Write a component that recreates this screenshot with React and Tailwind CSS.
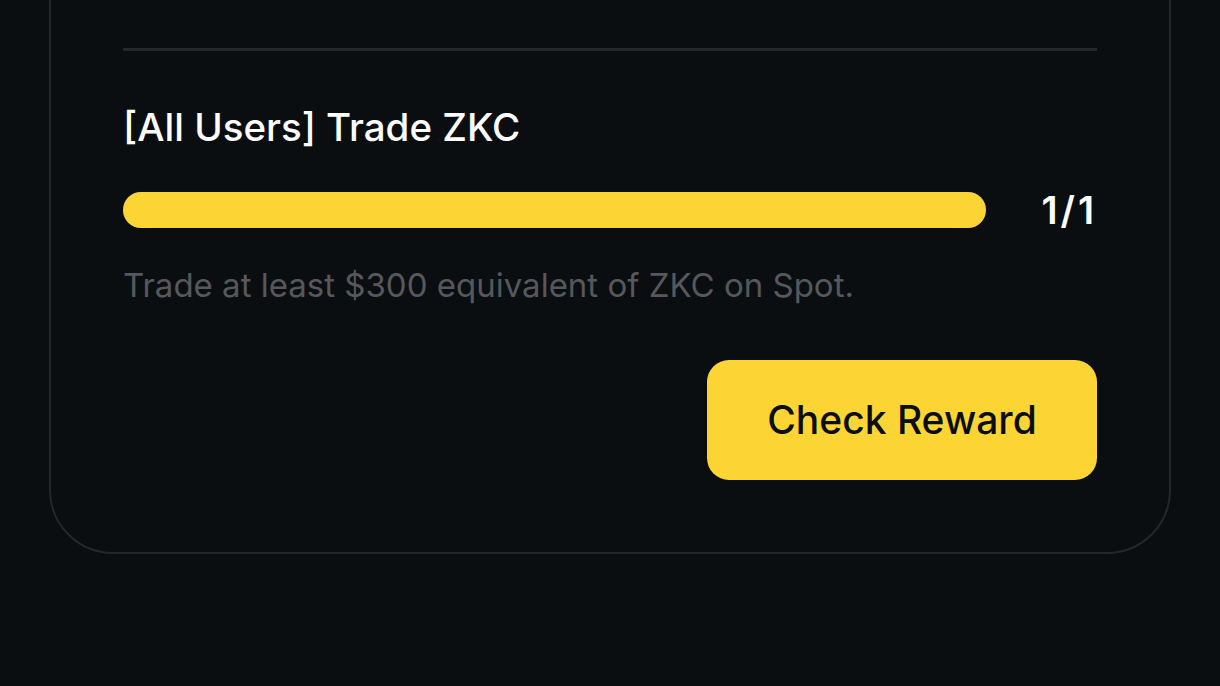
import React from 'react';

const TaskCard = () => {
    return (
        <div className="-mt-[100px] rounded-[64px] border-2 border-[#26272b] px-[72px] pt-[146px] pb-[72px]">
            {/* Divider */}
            <div className="h-[3px] bg-[#26272b]" />

            {/* Task title */}
            <h3 className="mt-[53px] text-[38.5px] leading-[46px] font-medium text-white">
                [All Users] Trade ZKC
            </h3>

            {/* Progress */}
            <div className="mt-[40px] flex items-center">
                <div className="h-[36px] flex-1 rounded-full bg-[#2b2f36]">
                    <div className="h-full w-full rounded-full bg-[#fcd535]" />
                </div>
                <span className="ml-[50px] w-[61px] text-right text-[38px] leading-[40px] font-semibold tracking-[3px] text-white">
                    1/1
                </span>
            </div>

            <p className="mt-[34px] text-[33px] leading-[42px] text-[#56585c]">
                Trade at least $300 equivalent of ZKC on Spot.
            </p>

            {/* Action */}
            <div className="mt-[54px] flex justify-end">
                <button className="h-[120px] w-[390px] rounded-[22px] bg-[#fcd535] text-[39px] font-medium text-[#0b0e11]">
                    Check Reward
                </button>
            </div>
        </div>
    );
};

export default function App() {
    return (
        <div
            className="h-[686px] w-[1220px] overflow-hidden bg-[#0b0e11] px-[49px]"
            style={{ fontFamily: 'Inter, "Noto Sans", sans-serif' }}
        >
            <TaskCard />
        </div>
    );
}
